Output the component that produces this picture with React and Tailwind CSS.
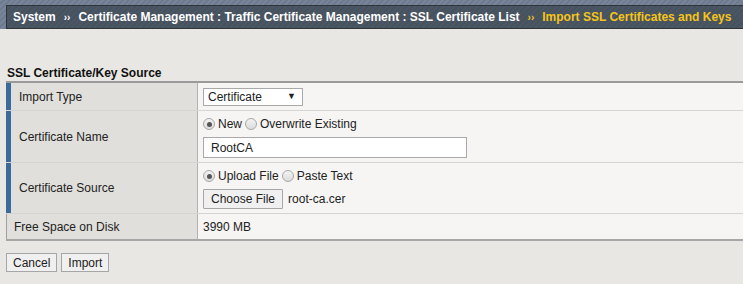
import React from "react";

const Radio = ({ checked, label }) => (
  <span className="inline-flex items-center">
    <span className="w-[12px] h-[12px] rounded-full border border-[#a8a8a8] bg-[linear-gradient(#f3f3f3,#dcdcdc)] flex items-center justify-center mr-[3px]">
      {checked && <span className="w-[5px] h-[5px] rounded-full bg-[#555]" />}
    </span>
    <span>{label}</span>
  </span>
);

const Row = ({ label, blue = true, h, children }) => (
  <div className={`flex border-b border-[#d4d4d4] last:border-b-0 ${h}`}>
    <div
      className={`w-[192px] shrink-0 flex items-center bg-[#e0dfdb] border-r border-[#b2b2b2] ${
        blue ? "border-l-[5px] border-l-[#3b6b9b] pl-[8px]" : "border-l border-l-[#a0a0a0] pl-[7px]"
      }`}
    >
      <span className="text-[#222]">{label}</span>
    </div>
    <div className="flex-1 flex flex-col justify-center pl-[5px] gap-[4px]">{children}</div>
  </div>
);

export default function App() {
  return (
    <div className="w-[743px] h-[284px] bg-[#e8e7e3] font-['Liberation_Sans',Arial,sans-serif] text-[12px] text-[#222] overflow-hidden">
      <div className="h-[29px] pt-[5px] pl-[6px] bg-[repeating-linear-gradient(135deg,#77849a_0px,#77849a_2px,#6e7b8e_2px,#6e7b8e_4px)]">
        <div className="h-[24px] border border-[#2f343a] border-r-0 bg-[repeating-linear-gradient(135deg,#4b5664_0px,#4b5664_2px,#47525f_2px,#47525f_4px)] flex items-center pl-[6px] font-bold text-[12px] text-white whitespace-nowrap">
          <span>System</span>
          <span className="mx-[8px] text-[10px]">››</span>
          <span>Certificate Management : Traffic Certificate Management : SSL Certificate List</span>
          <span className="mx-[8px] text-[10px] text-[#f5c518]">››</span>
          <span className="text-[#f5c518]">Import SSL Certificates and Keys</span>
        </div>
      </div>

      <div className="pt-[37px] pl-[7px] font-bold text-[#111] leading-[14px]">SSL Certificate/Key Source</div>

      <div className="ml-[6px] mt-[1px] border-t-2 border-t-[#9a9a9a] border-b-2 border-b-[#a6a6a6] bg-[#f6f5f3]">
        <Row label="Import Type" h="h-[28px]">
          <div className="w-[100px] h-[18px] border border-[#a9a9a9] bg-white flex items-center justify-between pl-[4px] pr-[6px]">
            <span>Certificate</span>
            <span className="text-[9px]">▼</span>
          </div>
        </Row>
        <Row label="Certificate Name" h="h-[52px]">
          <div className="flex items-center gap-[3px]">
            <Radio checked label="New" />
            <Radio label="Overwrite Existing" />
          </div>
          <div className="w-[264px] h-[21px] border border-[#a9a9a9] bg-white flex items-center pl-[7px]">RootCA</div>
        </Row>
        <Row label="Certificate Source" h="h-[51px]">
          <div className="flex items-center gap-[3px]">
            <Radio checked label="Upload File" />
            <Radio label="Paste Text" />
          </div>
          <div className="flex items-center">
            <span className="h-[20px] px-[7px] border border-[#a6a6a6] rounded-[1px] bg-[#f0f0f0] flex items-center">Choose File</span>
            <span className="ml-[5px]">root-ca.cer</span>
          </div>
        </Row>
        <Row label="Free Space on Disk" blue={false} h="h-[25px]">
          <span>3990 MB</span>
        </Row>
      </div>

      <div className="flex gap-[4px] pl-[6px] mt-[12px]">
        <span className="h-[19px] px-[6px] border border-[#a6a6a6] bg-[#f0f0f0] flex items-center">Cancel</span>
        <span className="h-[19px] px-[6px] border border-[#a6a6a6] bg-[#f0f0f0] flex items-center">Import</span>
      </div>
    </div>
  );
}
